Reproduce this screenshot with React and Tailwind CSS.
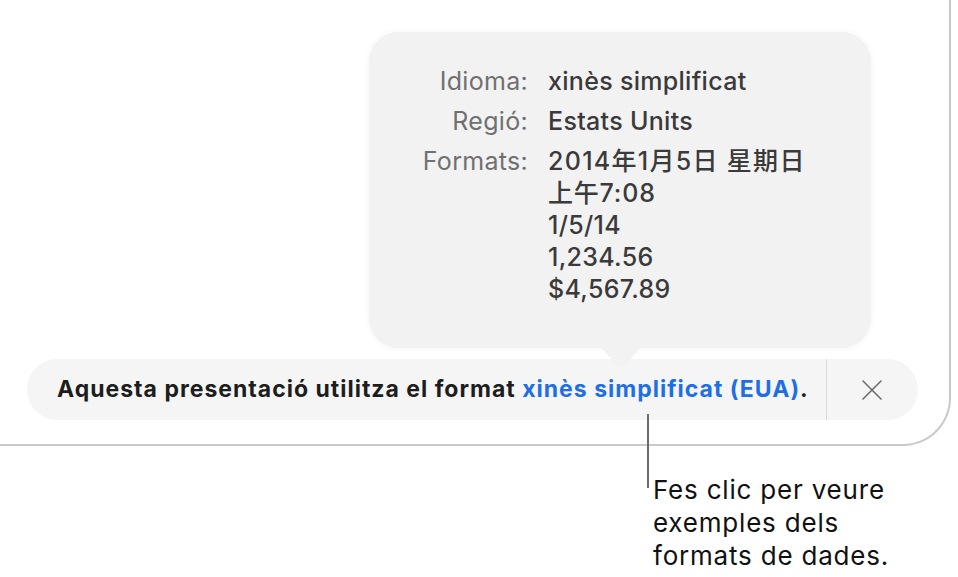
import React from "react";

export default function App() {
  const font = { fontFamily: "Inter, 'Noto Sans CJK SC', sans-serif" };
  return (
    <div className="relative w-[958px] h-[577px] bg-white overflow-hidden" style={font}>
      {/* window */}
      <div className="w-[951px] h-[446px] border-r-2 border-b-2 border-[#c9c9c9] rounded-br-[48px] flex flex-col justify-end pb-[24px] pl-[27px]">
        <div className="flex items-stretch w-[891px] h-[61px] rounded-full bg-[#f5f5f5]">
          <div className="flex-1 flex items-center pl-[30px] text-[23px] font-bold text-[#1d1d1d] tracking-[1px] whitespace-nowrap">
            Aquesta presentació utilitza el format&nbsp;
            <span className="text-[#1e6fe6]">xinès simplificat (EUA)</span>.
          </div>
          <div className="w-px bg-[#dadada]" />
          <div className="w-[91px] flex items-center justify-center pr-[2px]">
            <svg width="22" height="22" viewBox="0 0 22 22" fill="none" stroke="#6b6b6b" strokeWidth="1.6" strokeLinecap="round">
              <path d="M2 2 L20 20 M20 2 L2 20" />
            </svg>
          </div>
        </div>
      </div>

      {/* popover */}
      <div className="absolute left-[369px] top-[32px] w-[502px] h-[316px] rounded-[30px] bg-[#f2f2f2] shadow-[0_0_6px_rgba(0,0,0,0.05)] pt-[33px]">
        <div className="grid grid-cols-[159px_1fr] gap-x-[20px] gap-y-[8px] text-[25px] leading-[32px] tracking-[0.3px]">
          <div className="text-right text-[#707070]">Idioma:</div>
          <div className="font-medium text-[#3a3a3a]">xinès simplificat</div>
          <div className="text-right text-[#707070]">Regió:</div>
          <div className="font-medium text-[#3a3a3a]">Estats Units</div>
          <div className="text-right text-[#707070]">Formats:</div>
          <div className="font-medium text-[#3a3a3a] flex flex-col">
            <span className="tracking-[1.3px]">2014年1月5日 星期日</span>
            <span className="tracking-[0.8px]">上午7:08</span>
            <span>1/5/14</span>
            <span>1,234.56</span>
            <span>$4,567.89</span>
          </div>
        </div>
      </div>
      {/* arrow */}
      <svg className="absolute left-[600px] top-[346px]" width="42" height="24" viewBox="0 0 42 24">
        <path d="M0 0 L42 0 L25 19 Q21 23 17 19 Z" fill="#f2f2f2" />
      </svg>

      {/* callout */}
      <div className="absolute left-[647px] top-[414px] w-[2px] h-[74px] bg-[#6b6b6b]" />
      <div className="absolute left-[653px] top-[473px] text-[26px] leading-[33px] tracking-[0.8px] text-[#111]">
        Fes clic per veure<br />exemples dels<br />formats de dades.
      </div>
    </div>
  );
}
